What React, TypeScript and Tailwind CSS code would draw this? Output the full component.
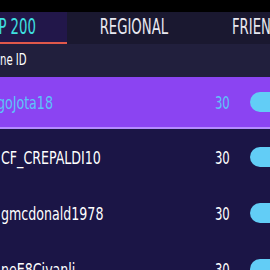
const font = { fontFamily: '"DejaVu Sans Condensed", "Liberation Sans Narrow", "Roboto Condensed", sans-serif' };

type Row = { name: string; score: number; me?: boolean };

const rows: Row[] = [
  { name: "DiogoJota18", score: 30, me: true },
  { name: "CF_CREPALDI10", score: 30 },
  { name: "gmcdonald1978", score: 30 },
  { name: "neE8Civanli", score: 30 },
];

export default function App() {
  return (
    <div className="h-[270px] w-[270px] overflow-hidden bg-[#1b1546] text-white" style={font}>
      <div className="h-[12px] bg-black" />
      <div className="flex h-[32px] bg-[#1a1830]">
        <div className="relative flex w-[67px] shrink-0 items-center justify-end overflow-hidden bg-[#22174a] pr-[31px]">
          <span className="inline-block origin-right scale-x-[0.7] whitespace-nowrap text-[21px] text-[#3fe0e0]">TOP 200</span>
          <div className="absolute bottom-0 left-0 h-[2px] w-full bg-[#e0584a]" />
        </div>
        <div className="flex w-[133px] shrink-0 items-center justify-center">
          <span className="inline-block scale-x-[0.7] text-[21px] text-[#e8e8f0]">REGIONAL</span>
        </div>
        <div className="flex flex-1 items-center pl-[32px]">
          <span className="inline-block origin-left scale-x-[0.7] whitespace-nowrap text-[21px] text-[#e8e8f0]">FRIENDS</span>
        </div>
      </div>
      <div className="flex h-[33px] items-center bg-[#211f3d]">
        <span className="-ml-[20px] inline-block origin-left scale-x-[0.75] whitespace-nowrap text-[15px]">Online ID</span>
      </div>
      {rows.map((r) => (
        <div
          key={r.name}
          className={
            r.me
              ? "flex h-[52px] items-center border-b-2 border-[#b48cff] bg-[#8b44f2]"
              : "flex h-[56px] items-center"
          }
        >
          <div className="min-w-0 flex-1">
            <span
              className={
                r.me
                  ? "-ml-[24px] inline-block origin-left scale-x-[0.78] whitespace-nowrap text-[18px] text-[#5cc4f8]"
                  : "ml-[1px] inline-block origin-left scale-x-[0.78] whitespace-nowrap text-[18px]"
              }
            >
              {r.name}
            </span>
          </div>
          <span
            className={
              r.me
                ? "mr-[17px] inline-block scale-x-[0.72] text-[18px] text-[#5cc4f8]"
                : "mr-[17px] inline-block scale-x-[0.72] text-[18px]"
            }
          >
            {r.score}
          </span>
          <div className="mr-[-20px] h-[20px] w-[40px] rounded-full bg-[#62cdf6]" />
        </div>
      ))}
    </div>
  );
}
